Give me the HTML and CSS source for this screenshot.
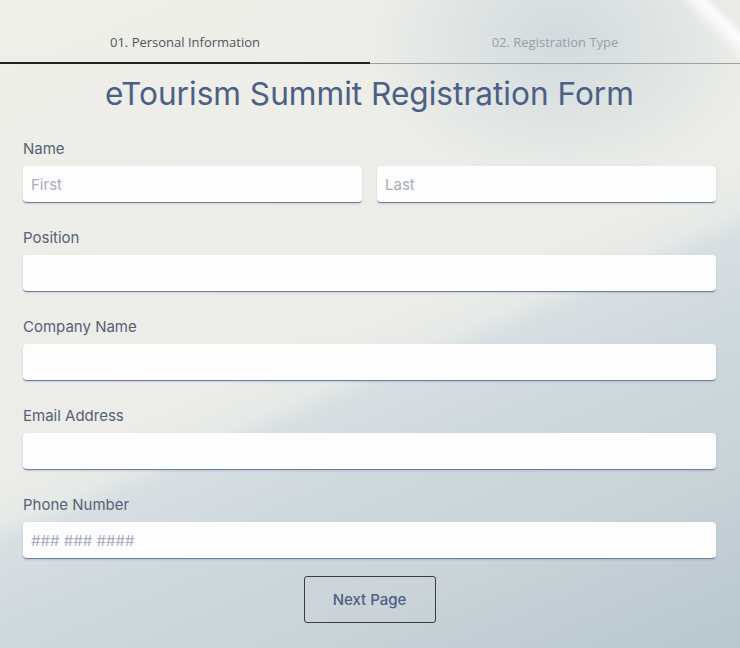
FILE: index.html
```html
<!DOCTYPE html>
<html lang="en">
<head>
<meta charset="utf-8">
<title>eTourism Summit Registration Form</title>
<link rel="stylesheet" href="styles.css">
</head>
<body>
<div class="page">
  <nav class="tabs">
    <div class="tab tab-active">01. Personal Information</div>
    <div class="tab">02. Registration Type</div>
  </nav>
  <form class="form">
    <h1 class="title">eTourism Summit Registration Form</h1>
    <div class="field">
      <label class="label">Name</label>
      <div class="pair">
        <input class="input" type="text" placeholder="First">
        <input class="input" type="text" placeholder="Last">
      </div>
    </div>
    <div class="field">
      <label class="label">Position</label>
      <input class="input" type="text">
    </div>
    <div class="field">
      <label class="label">Company Name</label>
      <input class="input" type="text">
    </div>
    <div class="field">
      <label class="label">Email Address</label>
      <input class="input" type="email">
    </div>
    <div class="field field-last">
      <label class="label">Phone Number</label>
      <input class="input" type="tel" placeholder="### ### ####">
    </div>
    <div class="actions">
      <button class="btn" type="button">Next Page</button>
    </div>
  </form>
</div>
</body>
</html>
```
FILE: styles.css
```css
* { box-sizing: border-box; }
html, body { margin: 0; height: 100%; }
body {
  font-family: "Inter", "Noto Sans", sans-serif;
  background:
    linear-gradient(225deg, rgba(255,255,255,0) 0, rgba(255,255,255,0) 18px, rgba(255,255,255,0.9) 28px, rgba(255,255,255,0) 45px),
    radial-gradient(ellipse 200px 150px at 560px 40px, rgba(200,212,218,0.75), rgba(200,212,218,0)),
    linear-gradient(157deg, #efefea 0%, #ecede8 50%, #e6e9e7 54.5%, #d7dfe2 57%, #d0d9dd 65%, #c9d3d8 80%, #b9c7cf 100%);
  background-size: 60px 60px, auto, auto;
  background-position: right top, 0 0, 0 0;
  background-repeat: no-repeat;
  min-height: 648px;
  overflow: hidden;
}
.page { width: 740px; }
.tabs {
  display: grid;
  grid-template-columns: 370px 370px;
  height: 64px;
}
.tab {
  text-align: center;
  font-family: "Open Sans", sans-serif;
  font-size: 13px;
  line-height: 18px;
  padding-top: 33px;
  color: #9a9ea4;
  border-bottom: 1px solid #9aa0a6;
}
.tab-active {
  color: #4e5560;
  border-bottom: 2px solid #222;
}
.form { padding: 0 24px 0 23px; }
.title {
  margin: 0;
  padding-top: 12px;
  height: 75px;
  text-align: center;
  font-weight: 400;
  font-size: 31.6px;
  line-height: 36px;
  color: #4b6084;
}
.field { margin-bottom: 25px; }
.field-last { margin-bottom: 17px; }
.label {
  display: block;
  font-size: 15px;
  line-height: 20px;
  color: #566175;
  margin-bottom: 7px;
}
.pair {
  display: grid;
  grid-template-columns: 1fr 1fr;
  gap: 15px;
}
.input {
  display: block;
  width: 100%;
  height: 37px;
  border: none;
  border-bottom: 1px solid #6a7ea6;
  border-radius: 4px;
  background: #fdfdfd;
  box-shadow: 0 1px 2px rgba(60,70,90,0.18);
  padding: 0 8px;
  font-family: inherit;
  font-size: 15px;
  color: #333;
}
.input::placeholder { color: #a8aeba; }
.actions { display: flex; justify-content: center; }
.btn {
  width: 132px;
  height: 47px;
  border: 1px solid #3a3d42;
  border-radius: 3px;
  background: transparent;
  font-family: inherit;
  font-size: 15px;
  font-weight: 500;
  color: #4b6084;
}
```
